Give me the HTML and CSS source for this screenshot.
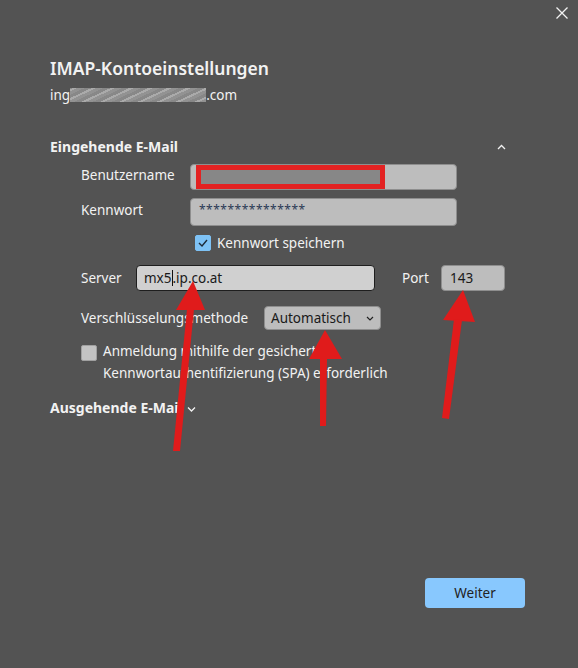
FILE: index.html
```html
<!DOCTYPE html>
<html>
	<head>
		<meta charset="utf-8">
		<meta name="viewport" content="width=device-width, initial-scale=1">
		<title>IMAP-Kontoeinstellungen</title>
		<link rel="stylesheet" href="styles.css">
	</head>
	<body>
		<div class="dialog">
			<!--Кнопка закрытия-->
			<div class="close">
				<svg width="12" height="12" viewBox="0 0 12 12"><path d="M0.5 0.5 L11.5 11.5 M11.5 0.5 L0.5 11.5" stroke="#f2f2f2" stroke-width="1.3" fill="none"/></svg>
			</div>

			<h1 class="title">IMAP-Kontoeinstellungen</h1>
			<div class="account">ing<span class="blur"></span>.com</div>

			<!--Входящая почта-->
			<div class="section-head">
				<span>Eingehende E-Mail</span>
				<svg width="9" height="6" viewBox="0 0 9 6"><path d="M1 5 L4.5 1.5 L8 5" stroke="#f2f2f2" stroke-width="1.3" fill="none"/></svg>
			</div>

			<div class="fields">
				<div class="row">
					<div class="lbl">Benutzername</div>
					<div class="input wide"><span class="redact"></span></div>
				</div>
				<div class="row row-pw">
					<div class="lbl">Kennwort</div>
					<div class="input wide tall"><span class="stars">***************</span></div>
				</div>
				<div class="row row-save">
					<span class="check on">
						<svg width="10" height="8" viewBox="0 0 10 8"><path d="M1 4 L4 7 L9 1" stroke="#1d2a38" stroke-width="1.4" fill="none"/></svg>
					</span>
					<span>Kennwort speichern</span>
				</div>
				<div class="row row-server">
					<div class="lbl lbl-short">Server</div>
					<div class="input server">mx5<span class="caret"></span>.ip.co.at</div>
					<div class="lbl-port">Port</div>
					<div class="input port">143</div>
				</div>
				<div class="row row-enc">
					<div class="lbl-enc">Verschlüsselungsmethode</div>
					<div class="select">
						<span>Automatisch</span>
						<svg width="8" height="5" viewBox="0 0 8 5"><path d="M1 1 L4 4 L7 1" stroke="#222" stroke-width="1.2" fill="none"/></svg>
					</div>
				</div>
				<div class="row row-spa">
					<span class="check"></span>
					<span class="spa-text">Anmeldung mithilfe der gesicherten<br>Kennwortauthentifizierung (SPA) erforderlich</span>
				</div>
			</div>

			<!--Исходящая почта-->
			<div class="section-head out">
				<span>Ausgehende E-Mail</span>
				<svg width="9" height="6" viewBox="0 0 9 6"><path d="M1 1.5 L4.5 5 L8 1.5" stroke="#f2f2f2" stroke-width="1.3" fill="none"/></svg>
			</div>

			<div class="footer">
				<button class="next">Weiter</button>
			</div>

			<!--Красные стрелки поверх формы-->
			<svg class="arrows" width="578" height="668" viewBox="0 0 578 668">
				<g fill="#e01b1b">
					<polygon points="193,281 205,310 176,310"/>
					<polygon points="187,309 194,309 180,451 173,451"/>
					<polygon points="325,330 342,359 309,359"/>
					<polygon points="320,358 327,358 326,426 320,426"/>
					<polygon points="463,290 475,322 443,320"/>
					<polygon points="454,319 462,320 449,419 442,418"/>
				</g>
			</svg>
		</div>
	</body>
</html>
```

FILE: styles.css
```css
body {
	margin: 0;
	background: #535353;
	font-family: "Noto Sans", "Open Sans", sans-serif;
	font-size: 13.5px;
	color: #f2f2f2;
}
.dialog {
	position: relative;
	width: 578px;
	height: 668px;
	padding: 56px 70px 0 50px;
	box-sizing: border-box;
	display: flex;
	flex-direction: column;
}
.close {
	position: absolute;
	top: 7px;
	right: 10px;
	width: 12px;
	height: 12px;
}
.close svg {
	display: block;
}
.title {
	margin: 0;
	font-size: 17.5px;
	font-weight: 600;
	line-height: 24px;
}
.account {
	margin-top: 4px;
	line-height: 22px;
	display: flex;
	align-items: center;
}
.blur {
	display: inline-block;
	width: 136px;
	height: 14px;
	background: repeating-linear-gradient(-25deg, #a2a2a2 0 3px, #c0c0c0 3px 5px, #959595 5px 8px);
	opacity: 0.8;
}
.section-head {
	margin-top: 31px;
	display: flex;
	justify-content: space-between;
	align-items: center;
	font-weight: 700;
	font-size: 14px;
	line-height: 20px;
}
.section-head svg {
	margin-right: 2px;
}
.section-head.out {
	margin-top: 14px;
	justify-content: flex-start;
	gap: 4px;
}
.section-head.out svg {
	margin-top: 2px;
}
.fields {
	padding-left: 31px;
	display: flex;
	flex-direction: column;
}
.row {
	display: flex;
	align-items: center;
}
.row:first-child {
	margin-top: 7px;
}
.lbl {
	width: 109px;
	flex: none;
	margin-top: -5px;
}
.input {
	box-sizing: border-box;
	height: 26px;
	background: #bdbdbd;
	border: 1px solid #8e8e8e;
	border-radius: 4px;
	color: #1a1a1a;
	padding: 0 8px;
	display: flex;
	align-items: center;
}
.wide {
	width: 267px;
}
.tall {
	height: 28px;
	align-items: flex-start;
	padding-top: 2px;
}
.row-pw {
	margin-top: 8px;
}
.redact {
	margin-left: -3px;
	width: 189px;
	height: 24px;
	box-sizing: border-box;
	border: 5px solid #e32222;
	background: #878787;
	display: block;
}
.stars {
	font-size: 12px;
	letter-spacing: 0.5px;
	color: #2b3a55;
}
.row-save {
	margin-top: 9px;
	padding-left: 114px;
	gap: 6px;
	height: 16px;
}
.check {
	width: 16px;
	height: 16px;
	box-sizing: border-box;
	border-radius: 2px;
	background: #c3c3c3;
	border: 1px solid #a0a0a0;
	display: flex;
	align-items: center;
	justify-content: center;
	flex: none;
}
.check.on {
	background: #7ec2f5;
	border-color: #7ec2f5;
}
.row-server {
	margin-top: 14px;
}
.lbl-short {
	width: 55px;
	margin-top: 0;
}
.server {
	width: 239px;
	background: #d0d0d0;
	border: 1.5px solid #1e1e1e;
	padding-left: 7px;
}
.caret {
	display: inline-block;
	width: 1px;
	height: 16px;
	background: #111;
}
.lbl-port {
	margin-left: 27px;
	width: 39px;
}
.port {
	width: 64px;
}
.row-enc {
	margin-top: 15px;
}
.lbl-enc {
	width: 183px;
	flex: none;
}
.select {
	box-sizing: border-box;
	width: 117px;
	height: 24px;
	background: #bdbdbd;
	border: 1px solid #8e8e8e;
	border-radius: 4px;
	color: #1a1a1a;
	padding: 0 6px;
	display: flex;
	align-items: center;
	justify-content: space-between;
}
.row-spa {
	margin-top: 14px;
	align-items: flex-start;
	gap: 6px;
}
.row-spa .check {
	margin-top: 1px;
}
.spa-text {
	line-height: 22px;
	margin-top: -4px;
}
.footer {
	margin-top: auto;
	margin-bottom: 60px;
	display: flex;
	justify-content: flex-end;
	margin-right: -17px;
}
.next {
	width: 100px;
	height: 30px;
	border: none;
	border-radius: 4px;
	background: #88c8fe;
	color: #222;
	font-family: inherit;
	font-size: 13.5px;
}
.arrows {
	position: absolute;
	left: 0;
	top: 0;
	pointer-events: none;
}
```
